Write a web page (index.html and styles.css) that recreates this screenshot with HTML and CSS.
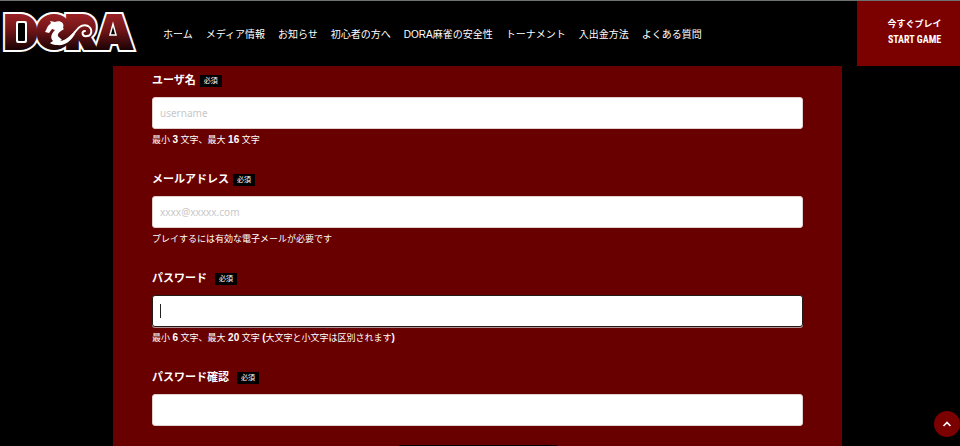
FILE: index.html
```html
<!DOCTYPE html>
<html lang="ja">
<head>
<meta charset="utf-8">
<title>DORA麻雀</title>
<link rel="stylesheet" href="styles.css">
</head>
<body>
<header class="header">
  <a class="logo" href="#" aria-label="DORA">
    <svg width="136" height="56" viewBox="0 -4 136 56">
      <defs>
        <linearGradient id="logo-fill" x1="0" y1="5" x2="0" y2="43" gradientUnits="userSpaceOnUse">
          <stop offset="0" stop-color="#9c2225"/>
          <stop offset="0.45" stop-color="#701517"/>
          <stop offset="1" stop-color="#160203"/>
        </linearGradient>
      </defs>
      <g class="logo-word">
        <text class="logo-outline" x="3 35 64 95" y="40">DORA</text>
        <text class="logo-face" x="3 35 64 95" y="40" fill="url(#logo-fill)">DORA</text>
      </g>
      <rect x="14" y="13" width="11" height="22" rx="2" fill="#fff"/>
      <rect x="16" y="15" width="7" height="18" rx="1" fill="#000"/>
      <path d="M46 12 H80 C94 12 95 20 90 27 L84 32 H46 Z" fill="url(#logo-fill)"/>
      <path d="M108 27 L111 16 L114 27 Z" fill="#000" stroke="#fff" stroke-width="1.5"/>
      <path d="M43 24 L46 18 L49 15 L48 13 L53 14 C58 12 63 15 61 20 L62 21 L59 23 C55 26 55 28 58 30 L60 32 L58 33 L60 35 C56 38 50 37 48 35 L51 33 C48 30 49 26 53 22 L50 21 L47 25 Z" fill="#fff"/>
      <path d="M54 35 C64 36 68 30 73 24 C77 18 82 16 86 18 C91 21 90 28 85 28 C80 29 79 23 83 23" fill="none" stroke="#fff" stroke-width="2" stroke-linecap="round"/>
      <path d="M52 34 C61 34 66 30 71 25 L73 26 C69 33 63 38 55 37 Z" fill="#fff"/>
    </svg>
  </a>
  <nav class="nav">
    <a href="#">ホーム</a>
    <a href="#">メディア情報</a>
    <a href="#">お知らせ</a>
    <a href="#">初心者の方へ</a>
    <a href="#">DORA麻雀の安全性</a>
    <a href="#">トーナメント</a>
    <a href="#">入出金方法</a>
    <a href="#">よくある質問</a>
  </nav>
  <a class="play" href="#">
    <span class="play-ja">今すぐプレイ</span>
    <span class="play-en">START GAME</span>
  </a>
</header>
<main class="panel">
  <form class="form">
    <div class="field">
      <div class="caption"><label for="username">ユーザ名</label><span class="badge">必須</span></div>
      <input class="input" id="username" type="text" placeholder="username">
      <p class="help">最小 <b>3</b> 文字、最大 <b>16</b> 文字</p>
    </div>
    <div class="field">
      <div class="caption"><label for="email">メールアドレス</label><span class="badge">必須</span></div>
      <input class="input" id="email" type="email" placeholder="xxxx@xxxxx.com">
      <p class="help">プレイするには有効な電子メールが必要です</p>
    </div>
    <div class="field">
      <div class="caption caption-wide"><label for="password">パスワード</label><span class="badge">必須</span></div>
      <input class="input input-active" id="password" type="password">
      <p class="help">最小 <b>6</b> 文字、最大 <b>20</b> 文字 <b>(</b>大文字と小文字は区別されます<b>)</b></p>
    </div>
    <div class="field">
      <div class="caption caption-wide"><label for="confirm">パスワード確認</label><span class="badge">必須</span></div>
      <input class="input" id="confirm" type="password">
    </div>
    <button class="submit" type="submit" aria-label="登録"></button>
  </form>
</main>
<button class="to-top" type="button" aria-label="トップへ">
  <svg width="10" height="6" viewBox="0 0 10 6"><path d="M1.5 5 L5 1.5 L8.5 5" fill="none" stroke="#fff" stroke-width="1.6"/></svg>
</button>
</body>
</html>
```
FILE: styles.css
```css
* {
  box-sizing: border-box;
}

body {
  margin: 0;
  height: 100vh;
  overflow: hidden;
  background: #000;
  color: #fff;
  font-family: "Liberation Sans", "Noto Sans CJK JP", sans-serif;
  font-size: 10px;
}

a {
  color: inherit;
  text-decoration: none;
}

.header {
  display: flex;
  align-items: stretch;
  height: 66px;
  border-top: 1px solid #6d7170;
  background: #000;
}

.logo {
  display: block;
  padding: 3px 0 0 2px;
}

.logo svg {
  display: block;
  overflow: visible;
}

.logo-word {
  font-family: Inter, sans-serif;
  font-size: 44px;
  font-weight: 900;
}

.logo-outline {
  fill: #fff;
  stroke: #fff;
  stroke-width: 8px;
}

.logo-face {
  stroke: url(#logo-fill);
  stroke-width: 4px;
}

.nav {
  display: flex;
  flex: 1;
  align-items: center;
  gap: 13px;
  padding-left: 25px;
  white-space: nowrap;
}

.play {
  display: flex;
  flex-direction: column;
  align-items: center;
  width: 103px;
  padding: 15px 0 0 12px;
  background: #7b0000;
  font-weight: 700;
  line-height: 16px;
}

.play-ja {
  font-size: 9px;
}

.play-en {
  font-family: "Roboto Condensed", "Liberation Sans Narrow", Roboto, sans-serif;
  font-size: 10px;
}

.panel {
  margin: 0 118px 0 113px;
  padding: 3px 39px 0;
  background: #690000;
}

.field {
  height: 99px;
}

.caption {
  display: flex;
  align-items: center;
  gap: 4px;
  height: 20px;
  margin-bottom: 8px;
  font-size: 11px;
  font-weight: 700;
}

.caption-wide {
  gap: 8px;
}

.badge {
  padding: 0 4px;
  margin-top: 3px;
  background: #000;
  font-size: 7px;
  font-weight: 400;
  line-height: 12px;
}

.input {
  display: block;
  width: 100%;
  height: 32px;
  padding: 0 7px;
  border: 1px solid #e2d0d0;
  border-radius: 3px;
  background: #fff;
  color: #222;
  font-family: "Noto Sans", sans-serif;
  font-size: 10px;
  outline: none;
}

.input::placeholder {
  color: #c8c8c8;
}

.input-active {
  border-color: #241818;
  box-shadow: 0 1px 0 #b09090;
  background: linear-gradient(#222, #222) 7px center / 1px 14px no-repeat #fff;
}

.help {
  margin: 3px 0 0;
  font-size: 9px;
  line-height: 16px;
}

.help b {
  font-size: 10px;
}

.submit {
  display: block;
  width: 160px;
  height: 40px;
  margin: -20px auto 0;
  border: 0;
  border-radius: 3px;
  background: #000;
}

.to-top {
  position: fixed;
  right: 0;
  bottom: 9px;
  display: flex;
  align-items: center;
  justify-content: center;
  width: 26px;
  height: 26px;
  padding: 0;
  border: 0;
  border-radius: 50%;
  background: #7b0000;
}
```
